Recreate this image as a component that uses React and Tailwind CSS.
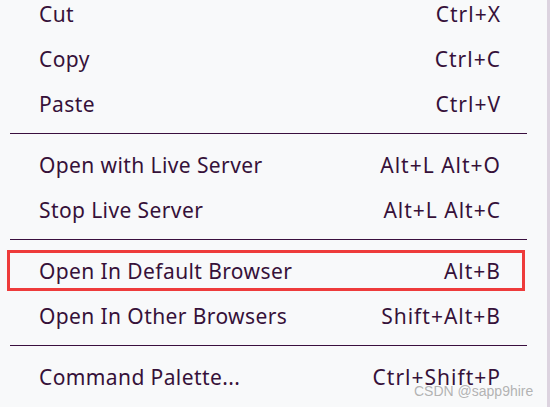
const groups = [
  [
    { label: "Cut", keys: "Ctrl+X" },
    { label: "Copy", keys: "Ctrl+C" },
    { label: "Paste", keys: "Ctrl+V" },
  ],
  [
    { label: "Open with Live Server", keys: "Alt+L Alt+O" },
    { label: "Stop Live Server", keys: "Alt+L Alt+C" },
  ],
  [
    { label: "Open In Default Browser", keys: "Alt+B", marked: true },
    { label: "Open In Other Browsers", keys: "Shift+Alt+B" },
  ],
  [{ label: "Command Palette...", keys: "Ctrl+Shift+P" }],
];

function Item({ label, keys, marked }) {
  return (
    <div className="relative flex h-[45px] items-center justify-between pl-[39px] pr-[46px]">
      <span>{label}</span>
      <span className="tracking-[1px]">{keys}</span>
      {marked && (
        <div className="absolute left-[7px] top-[1px] h-[41px] w-[518px] border-[3px] border-[#ee3b3b]" />
      )}
    </div>
  );
}

export default function App() {
  return (
    <div className="relative h-[407px] w-[550px] overflow-hidden bg-[#f8f9fa] text-[21px] tracking-[0.4px] text-[#361139] border-r-[3px] border-[#dcd3df]" style={{ fontFamily: '"Noto Sans", "Open Sans", sans-serif' }}>
      <div className="mt-[-8px]">
        {groups.map((g, i) => (
          <div key={i}>
            {i > 0 && (
              <div className="flex h-4 items-start pt-[6px] pl-[10px] pr-[20px]">
                <div className="h-px w-full bg-[#3a0f3f]" />
              </div>
            )}
            {g.map((it) => (
              <Item key={it.label} {...it} />
            ))}
          </div>
        ))}
      </div>
      <div className="absolute left-[414px] top-[381px] text-[14px] tracking-normal text-[#a0a0a0]/80" style={{ fontFamily: '"Liberation Sans", Arial, sans-serif' }}>
        CSDN @sapp9hire
      </div>
    </div>
  );
}
